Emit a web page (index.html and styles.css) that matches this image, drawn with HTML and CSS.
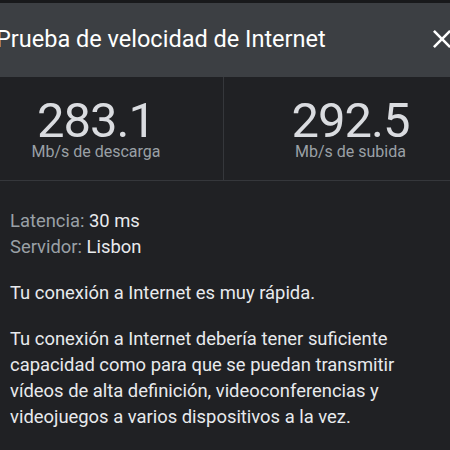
FILE: index.html
```html
<!DOCTYPE html>
<html lang="es">
<head>
<meta charset="utf-8">
<link rel="stylesheet" href="styles.css">
</head>
<body>
<div class="topbar"></div>
<div class="app">
  <header class="header">
    <h1 class="title">Prueba de velocidad de Internet</h1>
    <svg class="close" viewBox="5 5 14 14" aria-label="Cerrar"><path d="M19 6.41L17.59 5 12 10.59 6.41 5 5 6.41 10.59 12 5 17.59 6.41 19 12 13.41 17.59 19 19 17.59 13.41 12z" fill="#ffffff"/></svg>
  </header>
  <section class="stats">
    <div class="stat">
      <div class="value">283.1</div>
      <div class="label">Mb/s de descarga</div>
    </div>
    <div class="stat">
      <div class="value">292.5</div>
      <div class="label">Mb/s de subida</div>
    </div>
  </section>
  <section class="info">
    <div class="meta">
      <div><span class="key">Latencia:</span> <span class="val">30 ms</span></div>
      <div><span class="key">Servidor:</span> <span class="val">Lisbon</span></div>
    </div>
    <p class="text">Tu conexión a Internet es muy rápida.</p>
    <p class="text">Tu conexión a Internet debería tener suficiente capacidad como para que se puedan transmitir vídeos de alta definición, videoconferencias y videojuegos a varios dispositivos a la vez.</p>
  </section>
</div>
</body>
</html>
```
FILE: styles.css
```css
html, body {
  margin: 0;
  padding: 0;
  background: #202124;
  overflow: hidden;
  font-family: Roboto, "Noto Sans", sans-serif;
}
.topbar {
  height: 3px;
  background: #18191b;
}
.app {
  margin-left: -31px;
  width: 508px;
}
.header {
  height: 74px;
  background: #3c3f43;
  display: flex;
  align-items: center;
  justify-content: space-between;
  padding: 0 26px 0 27px;
  box-sizing: border-box;
}
.title {
  margin: 0;
  font-size: 23.5px;
  font-weight: 400;
  color: #ffffff;
  line-height: 26px;
  padding-bottom: 2px;
}
.close {
  width: 18px;
  height: 18px;
  margin-bottom: 3px;
}
.stats {
  display: grid;
  grid-template-columns: 1fr 1fr;
  border-bottom: 1px solid #35373b;
}
.stat {
  height: 103px;
  padding-top: 21px;
  box-sizing: border-box;
  text-align: center;
}
.stat + .stat {
  border-left: 1px solid #35373b;
}
.value {
  font-size: 49px;
  line-height: 46px;
  letter-spacing: -1px;
  color: #dadce0;
}
.label {
  font-size: 16px;
  line-height: 16px;
  color: #9aa0a6;
}
.info {
  padding: 27px 30px 0 41px;
}
.meta {
  font-size: 18.4px;
  line-height: 26px;
}
.key { color: #9aa0a6; }
.val { color: #e8eaed; }
.text {
  margin: 20px 0 0;
  font-size: 18.4px;
  line-height: 26px;
  color: #e8eaed;
}
```
